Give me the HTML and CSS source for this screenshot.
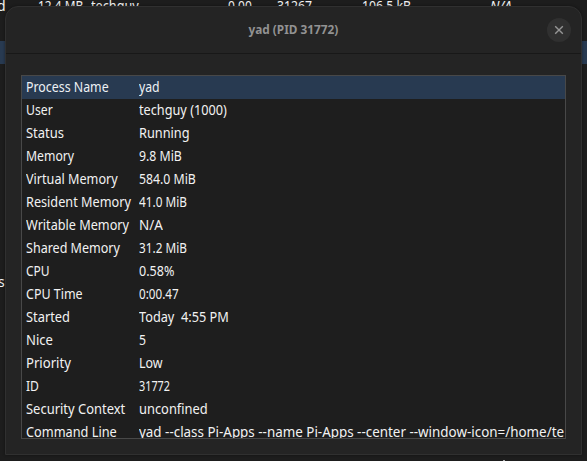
FILE: index.html
```
<!DOCTYPE html>
<html lang="en">
<head>
<meta charset="utf-8">
<title>yad (PID 31772)</title>
<link rel="stylesheet" href="styles.css">
</head>
<body>
<div class="backdrop">
  <div class="band"></div>
  <span class="behind b-d">d</span>
  <span class="behind b-size" data-w="45">12.4 MB</span>
  <span class="behind b-user" data-w="48">techguy</span>
  <span class="behind b-cpu" data-w="24">0.00</span>
  <span class="behind b-pid" data-w="35">31267</span>
  <span class="behind b-mem" data-w="49">106.5 kB</span>
  <span class="behind b-na" data-w="22">N/A</span>
  <span class="behind b-s">s</span>
  <div class="speck"></div>
</div>
<main class="dialog">
  <header class="titlebar">
    <h1 data-w="90">yad (PID 31772)</h1>
    <button class="close" aria-label="Close"><svg width="10" height="10" viewBox="0 0 10 10"><path d="M1.2 1.2 8.8 8.8M8.8 1.2 1.2 8.8"/></svg></button>
  </header>
  <section class="table">
    <div class="row selected"><span data-w="83">Process Name</span><span data-w="21">yad</span></div>
    <div class="row"><span data-w="27">User</span><span data-w="88">techguy (1000)</span></div>
    <div class="row"><span data-w="38">Status</span><span data-w="51">Running</span></div>
    <div class="row"><span data-w="48">Memory</span><span data-w="43">9.8 MiB</span></div>
    <div class="row"><span data-w="92">Virtual Memory</span><span data-w="57">584.0 MiB</span></div>
    <div class="row"><span data-w="105">Resident Memory</span><span data-w="48">41.0 MiB</span></div>
    <div class="row"><span data-w="103">Writable Memory</span><span data-w="24">N/A</span></div>
    <div class="row"><span data-w="94">Shared Memory</span><span data-w="48">31.2 MiB</span></div>
    <div class="row"><span data-w="24">CPU</span><span data-w="35">0.58%</span></div>
    <div class="row"><span data-w="57">CPU Time</span><span data-w="40">0:00.47</span></div>
    <div class="row"><span data-w="44">Started</span><span data-w="90">Today  4:55 PM</span></div>
    <div class="row"><span data-w="27">Nice</span><span data-w="7">5</span></div>
    <div class="row"><span data-w="45">Priority</span><span data-w="24">Low</span></div>
    <div class="row"><span data-w="13">ID</span><span data-w="31">31772</span></div>
    <div class="row"><span data-w="99">Security Context</span><span data-w="69">unconfined</span></div>
    <div class="row"><span data-w="91">Command Line</span><span data-w="425">yad --class Pi-Apps --name Pi-Apps --center --window-icon=/home/te</span></div>
  </section>
</main>
<script src="fit.js"></script>
</body>
</html>
```
FILE: styles.css
```
* { box-sizing: border-box; }
body {
  margin: 0;
  width: 587px;
  height: 461px;
  overflow: hidden;
  background: #1d1d1d;
  color: #f2f2f2;
  font: 14px/23px "Noto Sans", sans-serif;
}
.backdrop { position: absolute; inset: 0; overflow: hidden; }
.band { position: absolute; left: 0; right: 0; top: 41px; height: 23px; background: #283a51; }
.behind { position: absolute; top: -6px; white-space: pre; transform-origin: 0 50%; }
.b-d { left: -3px; }
.b-size { left: 38px; }
.b-user { left: 91px; }
.b-cpu { left: 228px; }
.b-pid { left: 277px; }
.b-mem { left: 362px; }
.b-na { left: 490px; font-style: italic; }
.b-s { left: -2px; top: 270px; }
.speck { position: absolute; left: 503px; top: 460px; width: 2px; height: 1px; background: #aaa; }
.dialog {
  position: relative;
  width: 577px;
  height: 449px;
  margin: 6px 0 0 5px;
  border: 1px solid #303030;
  border-radius: 13px 13px 0 0;
  background: #242424;
  box-shadow: 0 0 3px rgba(0, 0, 0, .4);
}
.titlebar {
  display: grid;
  grid-template-columns: 1fr auto 1fr;
  align-items: center;
  height: 47px;
  border-bottom: 1px solid #181818;
}
h1 {
  grid-column: 2;
  margin: 0;
  padding-bottom: 2px;
  color: #929292;
  font-size: 13px;
  font-weight: 700;
  line-height: 23px;
  white-space: pre;
}
.close {
  display: flex;
  align-items: center;
  justify-content: center;
  justify-self: end;
  width: 24px;
  height: 24px;
  margin-right: 10px;
  padding: 0;
  border: 0;
  border-radius: 50%;
  background: #303030;
}
.close path { fill: none; stroke: #969696; stroke-width: 1.4; }
.table {
  width: 545px;
  height: 364px;
  margin: 21px 0 0 15px;
  overflow: hidden;
  border: 1px solid #484848;
  background: #1e1e1e;
}
.row {
  display: grid;
  grid-template-columns: 113px 1fr;
  height: 23px;
  padding-left: 4px;
  line-height: 21px;
}
.row span { justify-self: start; white-space: pre; transform-origin: 0 50%; }
.selected { background: #283a51; color: #edf1f5; }
```
FILE: fit.js
```
document.querySelectorAll('[data-w]').forEach(function (el) {
  var natural = el.offsetWidth;
  el.style.transform = 'scaleX(' + (Number(el.dataset.w) / natural) + ')';
});
```
